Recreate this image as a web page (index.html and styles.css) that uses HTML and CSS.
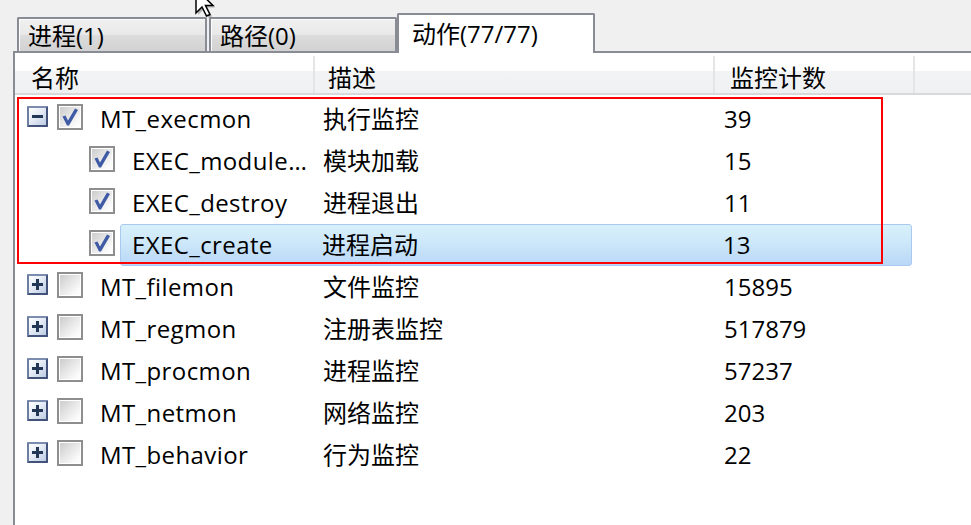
FILE: index.html
```html
<!DOCTYPE html>
<html lang="zh">
<head>
<meta charset="utf-8">
<title>动作</title>
<link rel="stylesheet" href="styles.css">
</head>
<body>
<div class="tabbar">
  <div class="tab">进程(1)</div>
  <div class="tab second">路径(0)</div>
  <div class="tab active">动作(77/77)</div>
</div>
<div class="panel">
  <div class="header">
    <div class="hcell c1">名称</div>
    <div class="hcell c2">描述</div>
    <div class="hcell c3">监控计数</div>
    <div class="hcell c4"></div>
  </div>
  <div class="rows">
    <div class="row">
      <span class="exp minus"></span>
      <span class="cb"><svg viewBox="0 0 22 22" class="chk"><path d="M3.5 10.5 L6.5 9.5 L9 14.5 L16 2.5 L19 4 L10 19.5 L8 19.5 Z"/></svg></span>
      <div class="cells"><span class="name">MT_execmon</span><span class="desc">执行监控</span><span class="count">39</span></div>
    </div>
    <div class="row child">
      <span class="cb"><svg viewBox="0 0 22 22" class="chk"><path d="M3.5 10.5 L6.5 9.5 L9 14.5 L16 2.5 L19 4 L10 19.5 L8 19.5 Z"/></svg></span>
      <div class="cells"><span class="name">EXEC_module…</span><span class="desc">模块加载</span><span class="count">15</span></div>
    </div>
    <div class="row child">
      <span class="cb"><svg viewBox="0 0 22 22" class="chk"><path d="M3.5 10.5 L6.5 9.5 L9 14.5 L16 2.5 L19 4 L10 19.5 L8 19.5 Z"/></svg></span>
      <div class="cells"><span class="name">EXEC_destroy</span><span class="desc">进程退出</span><span class="count">11</span></div>
    </div>
    <div class="row child">
      <span class="cb"><svg viewBox="0 0 22 22" class="chk"><path d="M3.5 10.5 L6.5 9.5 L9 14.5 L16 2.5 L19 4 L10 19.5 L8 19.5 Z"/></svg></span>
      <div class="cells sel"><span class="name">EXEC_create</span><span class="desc">进程启动</span><span class="count">13</span></div>
    </div>
    <div class="row">
      <span class="exp plus"></span>
      <span class="cb"></span>
      <div class="cells"><span class="name">MT_filemon</span><span class="desc">文件监控</span><span class="count">15895</span></div>
    </div>
    <div class="row">
      <span class="exp plus"></span>
      <span class="cb"></span>
      <div class="cells"><span class="name">MT_regmon</span><span class="desc">注册表监控</span><span class="count">517879</span></div>
    </div>
    <div class="row">
      <span class="exp plus"></span>
      <span class="cb"></span>
      <div class="cells"><span class="name">MT_procmon</span><span class="desc">进程监控</span><span class="count">57237</span></div>
    </div>
    <div class="row">
      <span class="exp plus"></span>
      <span class="cb"></span>
      <div class="cells"><span class="name">MT_netmon</span><span class="desc">网络监控</span><span class="count">203</span></div>
    </div>
    <div class="row">
      <span class="exp plus"></span>
      <span class="cb"></span>
      <div class="cells"><span class="name">MT_behavior</span><span class="desc">行为监控</span><span class="count">22</span></div>
    </div>
  </div>
</div>
<div class="redbox"></div>
<svg class="cursor" width="30" height="24" viewBox="0 0 30 24">
  <path class="shadow" d="M3 -9 L3 15 L9 9 L13.5 18 L17 16.5 L12.5 7.5 L20 7.5 Z"/>
  <path class="arrow" d="M1 -11 L1 13 L7 7 L11.5 16 L15 14.5 L10.5 5.5 L18 5.5 Z"/>
</svg>
</body>
</html>
```

FILE: styles.css
```css
html, body {
  margin: 0;
  padding: 0;
}
body {
  width: 971px;
  height: 525px;
  overflow: hidden;
  background: #f0f0f0;
  font-family: "Open Sans", "Noto Sans CJK SC", sans-serif;
  font-size: 24px;
  color: #000;
  position: relative;
}

/* tabs */
.tabbar {
  height: 51px;
  display: flex;
  align-items: flex-end;
  padding-left: 17px;
  box-sizing: border-box;
}
.tab {
  box-sizing: border-box;
  width: 190px;
  height: 34px;
  border: 2px solid #898c95;
  border-bottom: none;
  border-radius: 2px 2px 0 0;
  background: linear-gradient(#f0f0f0 0%, #e9e9e9 48%, #dcdcdc 52%, #d2d2d2 100%);
  box-shadow: inset 1px 1px 0 #fcfcfc;
  padding-left: 9px;
  line-height: 34px;
  white-space: nowrap;
}
.tab.second {
  margin-left: 2px;
  width: 188px;
}
.tab.active {
  width: 198px;
  height: 40px;
  margin-bottom: -2px;
  background: #fff;
  box-shadow: none;
  padding-left: 13px;
  line-height: 38px;
  z-index: 1;
}

/* panel */
.panel {
  margin-left: 13px;
  height: 474px;
  box-sizing: border-box;
  border-left: 2px solid #898c95;
  border-top: 2px solid #898c95;
  background: #fff;
  overflow: hidden;
}
.header {
  display: flex;
  height: 42px;
  box-sizing: border-box;
  padding-top: 3px;
  border-bottom: 2px solid #d8d9db;
  background: linear-gradient(#ffffff 0%, #ffffff 45%, #f2f3f5 46%, #f0f1f3 100%);
}
.hcell {
  box-sizing: border-box;
  height: 37px;
  padding-top: 6px;
  line-height: 31px;
  border-right: 2px solid #e4e5e7;
  white-space: nowrap;
}
.hcell.c1 { width: 300px; padding-left: 16px; }
.hcell.c2 { width: 400px; padding-left: 13px; }
.hcell.c3 { width: 200px; padding-left: 15px; }
.hcell.c4 { flex: 1; border-right: none; }

/* rows */
.rows {
  padding-top: 3px;
}
.row {
  display: flex;
  align-items: center;
  width: 897px;
  height: 42px;
  box-sizing: border-box;
  padding-left: 12px;
  line-height: 42px;
}
.row.child {
  padding-left: 74px;
}
.exp {
  position: relative;
  box-sizing: border-box;
  width: 21px;
  height: 21px;
  flex: none;
  margin-bottom: 5px;
  border: 2px solid #42527a;
  border-top-color: #7c8cae;
  border-left-color: #6d7ea3;
  border-radius: 1px;
  background: linear-gradient(135deg, #ffffff 0%, #e6ecf6 45%, #bccbe3 100%);
}
.exp::before,
.exp::after {
  content: "";
  position: absolute;
  background: #243656;
}
.exp::before {
  left: 3px;
  top: 7px;
  width: 11px;
  height: 3px;
}
.exp.plus::after {
  left: 7px;
  top: 3px;
  width: 3px;
  height: 11px;
}
.cb {
  box-sizing: border-box;
  width: 26px;
  height: 26px;
  flex: none;
  margin-left: 9px;
  margin-bottom: 4px;
  border: 2px solid #8e8e8e;
  background: linear-gradient(135deg, #c9c9c9 0%, #e6e6e6 45%, #fafafa 80%, #ffffff 100%);
  box-shadow: inset 0 0 0 1px #ffffff;
  display: flex;
}
.row.child .cb {
  margin-left: 0;
}
.chk {
  width: 22px;
  height: 22px;
}
.chk path {
  fill: #3f5ba6;
}
.cells {
  flex: 1;
  min-width: 0;
  display: flex;
  align-items: center;
  height: 42px;
  box-sizing: border-box;
  margin-left: 5px;
  padding-left: 12px;
  white-space: nowrap;
}
.cells.sel {
  padding-left: 11px;
  border: 1px solid #a9c9f1;
  border-radius: 3px;
  background: linear-gradient(#d8f0fb 0%, #cbe6f9 50%, #b9d7f7 100%);
  line-height: 40px;
}
.name {
  flex: 1;
  min-width: 0;
  overflow: hidden;
  letter-spacing: 0.4px;
}
.desc {
  width: 401px;
  flex: none;
}
.count {
  width: 188px;
  flex: none;
}

/* overlays */
.redbox {
  position: absolute;
  left: 17px;
  top: 97px;
  width: 866px;
  height: 167px;
  box-sizing: border-box;
  border: 2px solid #ff0000;
  z-index: 2;
}
.cursor {
  position: absolute;
  left: 195px;
  top: 0;
  z-index: 3;
  overflow: visible;
}
.cursor .shadow {
  fill: rgba(0, 0, 0, 0.25);
}
.cursor .arrow {
  fill: #ffffff;
  stroke: #000000;
  stroke-width: 1.5;
  stroke-linejoin: miter;
}
```
